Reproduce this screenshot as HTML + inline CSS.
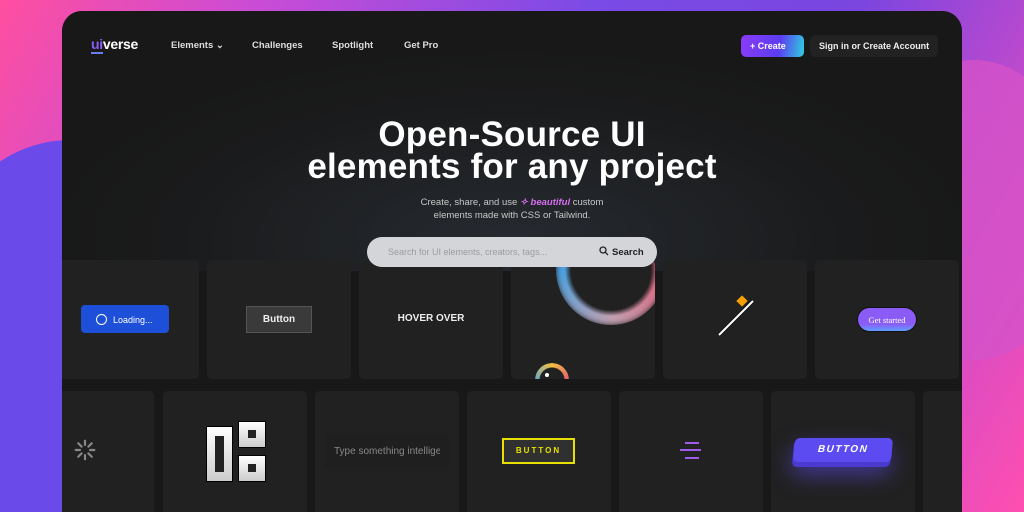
<!DOCTYPE html>
<html><head><meta charset="utf-8"><style>
*{margin:0;padding:0;box-sizing:border-box}
html,body{width:1024px;height:512px;overflow:hidden}
body{position:relative;font-family:"Liberation Sans",sans-serif;
background:linear-gradient(120deg,#ff4fa0 0%,#c94cd6 20%,#7a4be6 45%,#7a45e0 65%,#d04bc8 85%,#ff4fb0 100%);}
.bg1{position:absolute;left:-80px;top:140px;width:300px;height:372px;border-radius:50% 50% 0 0;background:#6a4ae8;}
.bg2{position:absolute;right:-60px;top:60px;width:220px;height:300px;border-radius:50%;background:#d552c8;opacity:.8}
.frame{position:absolute;left:62px;top:11px;width:900px;height:501px;border-radius:20px 20px 0 0;background:#181818;overflow:hidden;}
.hero{position:absolute;left:0;top:0;width:900px;height:260px;background:radial-gradient(ellipse 480px 200px at 450px 230px,#262a30 0%,#1a1b1c 70%,#181818 100%);}
.nav{position:absolute;top:29px;color:#ddd;font-size:9.5px;font-weight:bold}
.logo{position:absolute;left:29px;top:25px;color:#fff;font-weight:bold;font-size:14px;letter-spacing:-0.3px}
.logo span{color:#8b5cf6;border-bottom:2px solid #6a7cf6}
h1{position:absolute;left:0;width:900px;top:108px;text-align:center;color:#fff;font-size:35px;line-height:32px;font-weight:bold;letter-spacing:0.2px}
.sub{position:absolute;left:0;width:900px;top:185px;text-align:center;color:#c8c8c8;font-size:9.5px;line-height:13px}
.sub i{color:#d86ef0;font-weight:bold}
.search{position:absolute;left:305px;top:226px;width:290px;height:30px;border-radius:15px;background:#d3d5d9;}
.search .ph{position:absolute;left:21px;top:10px;font-size:9px;color:#9a9ca0}
.search .btn{position:absolute;left:232px;top:9px;font-size:9.5px;font-weight:bold;color:#222}
.card{position:absolute;width:144px;background:#212121;border-radius:5px;overflow:hidden}
.r1{top:249px;height:119px}.r2{top:380px;height:140px}
.create{position:absolute;left:679px;top:24px;width:63px;height:22px;border-radius:5px;background:linear-gradient(100deg,#8a3cf8 0%,#5b3cf0 60%,#2fd0e0 100%);color:#fff;font-size:9px;font-weight:bold;padding:6px 0 0 9px}
.sign{position:absolute;left:748px;top:24px;width:128px;height:22px;border-radius:5px;background:#222;color:#eee;font-size:9px;font-weight:bold;padding:6px 0 0 9px}
.c{position:absolute;left:0;width:144px;text-align:center}
</style></head><body>
<div class="bg1"></div><div class="bg2"></div>
<div class="frame">
<div class="hero"></div>
<div class="logo"><span>ui</span>verse</div>
<div class="nav" style="left:109px">Elements ⌄</div>
<div class="nav" style="left:190px">Challenges</div>
<div class="nav" style="left:270px">Spotlight</div>
<div class="nav" style="left:342px">Get Pro</div>
<div class="create">+ Create</div>
<div class="sign">Sign in or Create Account</div>
<h1>Open-Source UI<br>elements for any project</h1>
<div class="sub">Create, share, and use <i>✧ beautiful</i> custom<br>elements made with CSS or Tailwind.</div>

<div class="card r1" style="left:-7px"><div style="position:absolute;left:26px;top:45px;width:88px;height:28px;border-radius:4px;background:#1d4fd8;color:#fff;font-size:9px;padding:9px 0 0 15px"><span style="display:inline-block;width:11px;height:11px;border:1.5px solid #fff;border-radius:50%;vertical-align:-2px;margin-right:6px"></span>Loading...</div></div>
<div class="card r1" style="left:145px"><div style="position:absolute;left:39px;top:46px;width:66px;height:27px;background:#3a3a3a;border:1px solid #555;color:#eee;font-weight:bold;font-size:10px;text-align:center;line-height:25px">Button</div></div>
<div class="card r1" style="left:297px"><div class="c" style="top:53px;color:#eee;font-weight:bold;font-size:10px">HOVER OVER</div></div>
<div class="card r1" style="left:449px"><div style="position:absolute;left:45px;top:-45px;width:110px;height:110px;border-radius:50%;background:conic-gradient(from 90deg,#e0607a,#c0a0b0,#4aa0e0,#e05a80,#e0607a);-webkit-mask:radial-gradient(circle,transparent 40px,#000 46px);filter:blur(3px)"></div><div style="position:absolute;left:24px;top:103px;width:34px;height:34px;border-radius:50%;background:conic-gradient(#f0c040,#e04080,#40a0f0,#f0c040);-webkit-mask:radial-gradient(circle,transparent 12px,#000 13px)"></div><div style="position:absolute;left:34px;top:113px;width:4px;height:4px;border-radius:50%;background:#fff"></div></div>
<div class="card r1" style="left:601px"><svg width="144" height="119" style="position:absolute;left:0;top:0"><line x1="56" y1="75" x2="90" y2="41" stroke="#111" stroke-width="4"/><line x1="56" y1="75" x2="90" y2="41" stroke="#fff" stroke-width="2"/><rect x="75" y="37" width="8" height="8" fill="#f5a000" transform="rotate(45 79 41)"/></svg></div>
<div class="card r1" style="left:753px"><div style="position:absolute;left:42px;top:47px;width:60px;height:25px;border-radius:13px;background:linear-gradient(#8a5cf5 70%,#60a0ff);color:#fff;font-family:'Liberation Serif',serif;font-size:8.5px;text-align:center;line-height:25px;border:1px solid #111">Get started</div></div>
<div class="card r1" style="left:905px"></div>

<div class="card r2" style="left:-52px"><svg style="position:absolute;left:64px;top:48px" width="22" height="22" viewBox="-13 -13 26 26"><g stroke="#888" stroke-width="2.6" stroke-linecap="round"><line x1="0" y1="-6" x2="0" y2="-11"/><line x1="0" y1="6" x2="0" y2="11"/><line x1="6" y1="0" x2="11" y2="0"/><line x1="-6" y1="0" x2="-11" y2="0"/><line x1="4" y1="4" x2="8" y2="8"/><line x1="-4" y1="-4" x2="-8" y2="-8"/><line x1="4" y1="-4" x2="8" y2="-8"/><line x1="-4" y1="4" x2="-8" y2="8"/></g></svg></div>
<div class="card r2" style="left:101px"><div style="position:absolute;left:43px;top:35px;width:27px;height:56px;background:linear-gradient(#fff,#ccc);border:1px solid #000"><div style="position:absolute;left:8px;top:9px;width:9px;height:36px;background:#222"></div></div><div style="position:absolute;left:75px;top:30px;width:28px;height:27px;background:linear-gradient(#fff,#ccc);border:1px solid #000"><div style="position:absolute;left:9px;top:8px;width:8px;height:8px;background:#222"></div></div><div style="position:absolute;left:75px;top:64px;width:28px;height:27px;background:linear-gradient(#fff,#ccc);border:1px solid #000"><div style="position:absolute;left:9px;top:8px;width:8px;height:8px;background:#222"></div></div></div>
<div class="card r2" style="left:253px"><div style="position:absolute;left:10px;top:42px;width:124px;height:36px;background:#1f1f1f;border-radius:4px"></div><div style="position:absolute;left:19px;top:55px;color:#888;font-size:10px;white-space:nowrap;width:106px;overflow:hidden">Type something intelligent</div></div>
<div class="card r2" style="left:405px"><div style="position:absolute;left:35px;top:47px;width:73px;height:26px;border:2px solid #e8e000;background:#303030;color:#e8e000;font-size:8px;letter-spacing:2px;text-align:center;line-height:22px;font-weight:bold">BUTTON</div></div>
<div class="card r2" style="left:557px"><div style="position:absolute;top:51px;width:14px;height:2px;background:#a05ce8;left:66px"></div><div style="position:absolute;left:61px;top:58px;width:21px;height:2px;background:#a05ce8"></div><div style="position:absolute;left:66px;top:66px;width:14px;height:2px;background:#a05ce8"></div></div>
<div class="card r2" style="left:709px"><div style="position:absolute;left:22px;top:49px;width:98px;height:27px;background:#4a3ad0;border-radius:5px;transform:skewX(-5deg);box-shadow:0 8px 22px rgba(100,80,255,.5)"></div><div style="position:absolute;left:23px;top:47px;width:98px;height:24px;background:#5b4bf0;border-radius:5px;transform:skewX(-5deg);color:#fff;font-weight:bold;font-style:italic;font-size:10px;letter-spacing:1.5px;text-align:center;line-height:24px">BUTTON</div></div>
<div class="card r2" style="left:861px"></div>

<div class="search"><div class="ph">Search for UI elements, creators, tags...</div><div class="btn"><svg width="10" height="10" viewBox="0 0 10 10" style="vertical-align:-1px;margin-right:3px"><circle cx="4" cy="4" r="3" fill="none" stroke="#222" stroke-width="1.3"/><line x1="6.2" y1="6.2" x2="9" y2="9" stroke="#222" stroke-width="1.3"/></svg>Search</div></div>
</div>
</body></html>
